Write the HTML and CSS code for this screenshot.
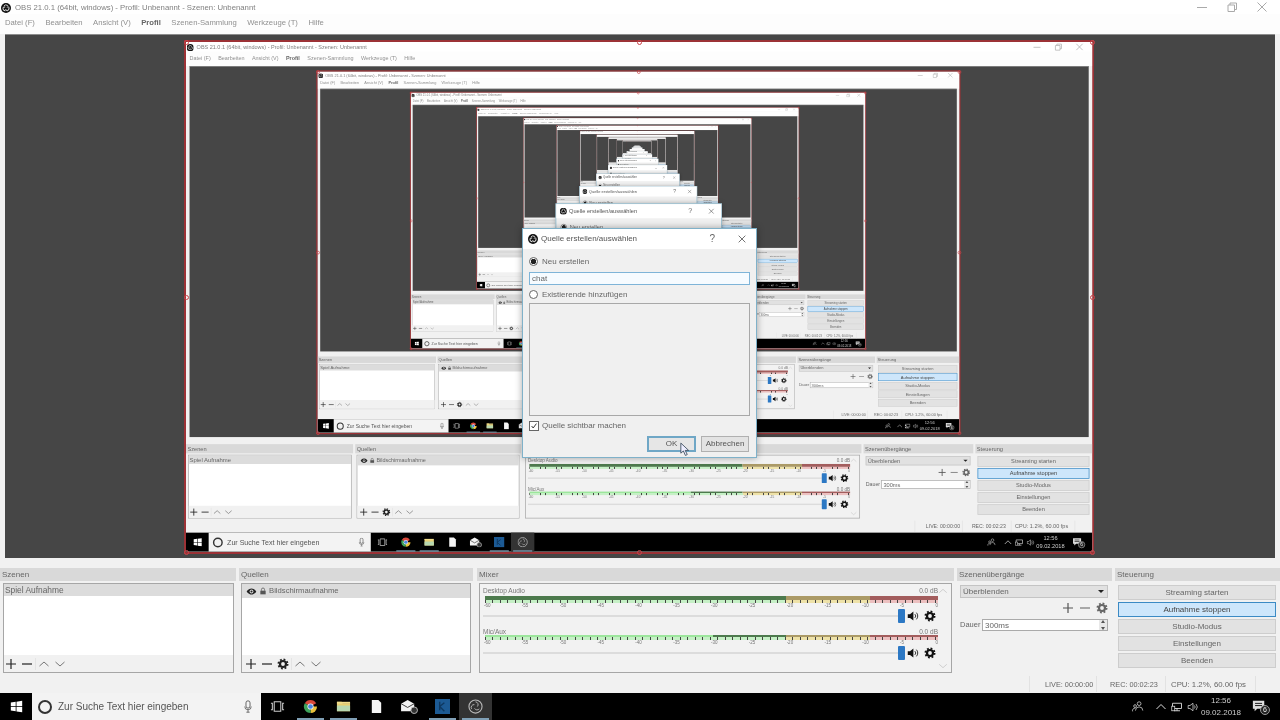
FILE: index.html
```html
<!DOCTYPE html>
<html lang="de">
<head>
<meta charset="utf-8">
<title>OBS 21.0.1</title>
<link rel="stylesheet" href="styles.css">
<script src="script.js" defer></script>
</head>
<body>
<svg class="sprite" aria-hidden="true">
  <symbol id="obs" viewBox="0 0 16 16"><circle cx="8" cy="8" r="8" fill="#111"/><g fill="none" stroke="#ddd" stroke-width="1.500"><path d="M4.500 5a4.500 4.500 0 0 1 6-1.200a2.500 2.500 0 0 1-.8 3.700"/><path d="M4.500 5a4.500 4.500 0 0 1 6-1.200a2.500 2.500 0 0 1-.8 3.700" transform="rotate(120 8 8)"/><path d="M4.500 5a4.500 4.500 0 0 1 6-1.200a2.500 2.500 0 0 1-.8 3.700" transform="rotate(240 8 8)"/></g></symbol>
  <symbol id="obs-tb" viewBox="0 0 16 16"><circle cx="8" cy="8" r="7" fill="none" stroke="#b8b8b8" stroke-width="1.2"/><path d="M8 3a3 3 0 0 1 2 5M3.800 10.500a3 3 0 0 1 3-4.500M12 10.500a3 3 0 0 1-5-.5" fill="none" stroke="#b8b8b8" stroke-width="1"/></symbol>
  <symbol id="plus" viewBox="0 0 12 12"><path d="M6 1v10M1 6h10" stroke="currentColor" stroke-width="1.2" fill="none"/></symbol>
  <symbol id="minus" viewBox="0 0 12 12"><path d="M1 6h10" stroke="currentColor" stroke-width="1.2" fill="none"/></symbol>
  <symbol id="up" viewBox="0 0 12 12"><path d="M1.500 8 6 4l4.500 4" stroke="currentColor" fill="none"/></symbol>
  <symbol id="down" viewBox="0 0 12 12"><path d="M1.500 4 6 8l4.500-4" stroke="currentColor" fill="none"/></symbol>
  <symbol id="gear" viewBox="0 0 12 12"><circle cx="6" cy="6" r="4.600" fill="none" stroke="currentColor" stroke-width="1.800" stroke-dasharray="1.800 1.810"/><circle cx="6" cy="6" r="3" fill="none" stroke="currentColor" stroke-width="2.200"/></symbol>
  <symbol id="eye" viewBox="0 0 16 16"><path d="M1 8s2.500-4.500 7-4.500S15 8 15 8s-2.500 4.500-7 4.500S1 8 1 8z" fill="#222"/><circle cx="8" cy="8" r="2.800" fill="#ddd"/><circle cx="8" cy="8" r="1.500" fill="#222"/></symbol>
  <symbol id="lock" viewBox="0 0 12 12"><rect x="2" y="5.500" width="8" height="5.500" fill="#555"/><path d="M3.700 5.500V3.800a2.300 2.300 0 0 1 4.600 0v1.700" fill="none" stroke="#555" stroke-width="1.100"/></symbol>
  <symbol id="speaker" viewBox="0 0 16 16"><path d="M1 5.500h3L8.500 2v12L4 10.500H1z" fill="#111"/><path d="M10.500 5.500a3.500 3.500 0 0 1 0 5M12.500 3.500a6.500 6.500 0 0 1 0 9" fill="none" stroke="#111" stroke-width="1.100"/></symbol>
  <symbol id="win" viewBox="0 0 16 16"><path d="M1 3l6-.900V7.600H1zM8 2l7-1v6.600H8zM1 8.500h6v5.400l-6-.900zM8 8.500h7V15l-7-1z" fill="#fff"/></symbol>
  <symbol id="mic" viewBox="0 0 12 16"><rect x="3.500" y="1" width="5" height="9" rx="2.500" fill="none" stroke="#555" stroke-width="1.100"/><path d="M2 8a4 4 0 0 0 8 0M6 12v3M4 15h4" fill="none" stroke="#555"/></symbol>
  <symbol id="taskview" viewBox="0 0 16 16"><path d="M4.500 3h7v10h-7zM1 4.500h1.500v7H1M15 4.500h-1.500v7H15" fill="none" stroke="#ccc" stroke-width="1.100"/></symbol>
  <symbol id="chrome" viewBox="0 0 16 16"><path d="M8 8 1.900 4.500A7 7 0 0 1 14.100 4.500z" fill="#d9483b"/><path d="M8 8h7A7 7 0 0 1 8 15z" fill="#eac13c"/><path d="M8 8v7A7 7 0 0 1 1.900 4.500z" fill="#3ea35a"/><circle cx="8" cy="8" r="3.300" fill="#eee"/><circle cx="8" cy="8" r="2.500" fill="#4a85e0"/></symbol>
  <symbol id="folder" viewBox="0 0 16 16"><path d="M1 3h5l1 1.500h8V13H1z" fill="#e8cf72"/><rect x="1" y="7" width="14" height="6" fill="#b8d8b0"/><rect x="1" y="3" width="14" height="2" fill="#f1dd8c"/></symbol>
  <symbol id="file" viewBox="0 0 16 16"><path d="M3 1h7l3 3v11H3z" fill="#f5f5f5"/></symbol>
  <symbol id="mail" viewBox="0 0 20 16"><path d="M1 5l7-4 7 4v8H1z" fill="#f2f2f2"/><path d="M1 5l7 4 7-4" fill="none" stroke="#333"/><circle cx="15" cy="12" r="3.500" fill="#333" stroke="#bbb"/></symbol>
  <symbol id="blue" viewBox="0 0 16 16"><rect width="16" height="16" fill="#1c5a94"/><path d="M5 3v9M5 8l5-4M5 8l5 5" stroke="#0e3860" stroke-width="1.500" fill="none"/></symbol>
  <symbol id="people" viewBox="0 0 16 16"><circle cx="10" cy="4.500" r="2.300" fill="none" stroke="#ccc"/><path d="M5.500 13a4.500 4.500 0 0 1 9 0M2 14a3 3 0 0 1 3-4" fill="none" stroke="#ccc"/><circle cx="5" cy="7.500" r="1.700" fill="none" stroke="#ccc"/></symbol>
  <symbol id="caret" viewBox="0 0 12 12"><path d="M1.500 8 6 3.500 10.500 8" fill="none" stroke="#ddd"/></symbol>
  <symbol id="net" viewBox="0 0 16 16"><path d="M2 3h12v7H2zM8 10v3M4 13h8" fill="none" stroke="#ddd" stroke-width="1.200"/><rect x="1" y="7" width="4" height="6" fill="#000" stroke="#ddd"/></symbol>
  <symbol id="vol" viewBox="0 0 16 16"><path d="M1.500 6h2.500L8 3v10L4 10H1.500z" fill="none" stroke="#ddd"/><path d="M10 6a3 3 0 0 1 0 4M12 4a6 6 0 0 1 0 8" fill="none" stroke="#ddd"/></symbol>
  <symbol id="notif" viewBox="0 0 16 16"><path d="M1 2h13v9H6l-3 3v-3H1z" fill="#ddd"/><path d="M3.500 5h8M3.500 7.500h8" stroke="#000"/></symbol>
</svg>

<div class="app">
  <div class="titlebar">
    <svg class="logo"><use href="#obs"/></svg>
    <span class="title-text">OBS 21.0.1 (64bit, windows) - Profil: Unbenannt - Szenen: Unbenannt</span>
    <div class="winctl">
      <svg viewBox="0 0 12 12"><path d="M1 6.500h10" stroke="#aaa" fill="none"/></svg>
      <svg viewBox="0 0 12 12"><path d="M2 4h6.500v6.500H2zM4 4V2h6.500v6.500H8.500" stroke="#aaa" fill="none"/></svg>
      <svg viewBox="0 0 12 12"><path d="M1.500 1.500l9 9M10.500 1.500l-9 9" stroke="#aaa" fill="none"/></svg>
    </div>
  </div>
  <div class="menubar">
    <span>Datei (F)</span><span>Bearbeiten</span><span>Ansicht (V)</span><span class="menu-active">Profil</span><span>Szenen-Sammlung</span><span>Werkzeuge (T)</span><span>Hilfe</span>
  </div>

  <div class="preview">
    <div class="sel">
      <i class="h h-tl"></i><i class="h h-tc"></i><i class="h h-tr"></i><i class="h h-ml"></i><i class="h h-mr"></i><i class="h h-bl"></i><i class="h h-bc"></i><i class="h h-br"></i>
    </div>
  </div>

  <div class="docks">
    <section class="dock">
      <h2 class="dock-head">Szenen</h2>
      <div class="listbox lb-scenes">
        <div class="row row-scene">Spiel Aufnahme</div>
        <div class="toolbar tb-scenes">
          <svg class="tool"><use href="#plus"/></svg><svg class="tool"><use href="#minus"/></svg><b class="tsep"></b><svg class="tool dim"><use href="#up"/></svg><svg class="tool dim"><use href="#down"/></svg>
        </div>
      </div>
    </section>

    <section class="dock">
      <h2 class="dock-head">Quellen</h2>
      <div class="listbox lb-sources">
        <div class="row row-source"><svg class="eye"><use href="#eye"/></svg><svg class="lock"><use href="#lock"/></svg><span>Bildschirmaufnahme</span></div>
        <div class="toolbar">
          <svg class="tool"><use href="#plus"/></svg><svg class="tool"><use href="#minus"/></svg><svg class="tool"><use href="#gear"/></svg><b class="tsep"></b><svg class="tool dim"><use href="#up"/></svg><svg class="tool dim"><use href="#down"/></svg>
        </div>
      </div>
    </section>

    <section class="dock dock-mixer">
      <h2 class="dock-head">Mixer</h2>
      <div class="mixer">
        <div class="tracks">
          <div class="track">
            <div class="track-head"><span>Desktop Audio</span><span>0.0 dB</span></div>
            <div class="meter"><b class="seg seg-g"></b><b class="seg seg-y"></b><b class="seg seg-r"></b></div>
            <div class="ticks"></div>
            <div class="scale"><span>-60</span><span>-55</span><span>-50</span><span>-45</span><span>-40</span><span>-35</span><span>-30</span><span>-25</span><span>-20</span><span>-15</span><span>-10</span><span>-5</span><span>0</span></div>
            <div class="fader"><b class="fader-line"></b><b class="thumb"></b><svg class="speaker"><use href="#speaker"/></svg><svg class="fgear"><use href="#gear"/></svg></div>
          </div>
          <div class="track">
            <div class="track-head"><span>Mic/Aux</span><span>0.0 dB</span></div>
            <div class="meter meter-mic"><b class="seg seg-lit"></b><b class="seg seg-g2"></b><b class="seg seg-y"></b><b class="seg seg-r"></b></div>
            <div class="ticks"></div>
            <div class="scale"><span>-60</span><span>-55</span><span>-50</span><span>-45</span><span>-40</span><span>-35</span><span>-30</span><span>-25</span><span>-20</span><span>-15</span><span>-10</span><span>-5</span><span>0</span></div>
            <div class="fader"><b class="fader-line"></b><b class="thumb"></b><svg class="speaker"><use href="#speaker"/></svg><svg class="fgear"><use href="#gear"/></svg></div>
          </div>
        </div>
        <div class="vscroll"><svg><use href="#up"/></svg><svg><use href="#down"/></svg></div>
      </div>
    </section>

    <section class="dock">
      <h2 class="dock-head">Szenenübergänge</h2>
      <div class="trans">
        <div class="combo"><span>Überblenden</span><b class="combo-arrow"></b></div>
        <div class="trans-tools"><svg class="tool"><use href="#plus"/></svg><svg class="tool dim"><use href="#minus"/></svg><svg class="tool dim2"><use href="#gear"/></svg></div>
        <div class="duration"><span class="dur-label">Dauer</span><div class="spin"><span>300ms</span><b class="spin-arrows"></b></div></div>
      </div>
    </section>

    <section class="dock">
      <h2 class="dock-head">Steuerung</h2>
      <div class="controls">
        <button class="ctl">Streaming starten</button>
        <button class="ctl ctl-on">Aufnahme stoppen</button>
        <button class="ctl">Studio-Modus</button>
        <button class="ctl">Einstellungen</button>
        <button class="ctl">Beenden</button>
      </div>
    </section>
  </div>

  <div class="status">
    <b class="st-sep sep-a"></b><span class="st st-live">LIVE: 00:00:00</span><b class="st-sep sep-b"></b><span class="st st-rec">REC: 00:02:23</span><b class="st-sep sep-c"></b><span class="st st-cpu">CPU: 1.2%, 60.00 fps</span><b class="st-sep sep-d"></b>
  </div>

  <div class="taskbar">
    <div class="start"><svg><use href="#win"/></svg></div>
    <div class="search"><b class="cortana"></b><span class="search-text">Zur Suche Text hier eingeben</span><svg class="mic"><use href="#mic"/></svg></div>
    <div class="tasks">
      <div class="task"><svg><use href="#taskview"/></svg></div>
      <div class="task on"><svg><use href="#chrome"/></svg></div>
      <div class="task on"><svg><use href="#folder"/></svg></div>
      <div class="task"><svg><use href="#file"/></svg></div>
      <div class="task"><svg class="wide"><use href="#mail"/></svg></div>
      <div class="task on"><svg><use href="#blue"/></svg></div>
      <div class="task on active"><svg><use href="#obs-tb"/></svg></div>
    </div>
    <div class="tray">
      <svg class="tray-people"><use href="#people"/></svg>
      <svg class="tray-i"><use href="#caret"/></svg>
      <svg class="tray-i"><use href="#net"/></svg>
      <svg class="tray-i"><use href="#vol"/></svg>
      <div class="clock"><span>12:56</span><span>09.02.2018</span></div>
      <div class="notif"><svg><use href="#notif"/></svg><em>6</em></div>
    </div>
  </div>

  <div class="dialog">
    <div class="dlg-title">
      <svg class="dlg-logo"><use href="#obs"/></svg>
      <span class="dlg-name">Quelle erstellen/auswählen</span>
      <span class="dlg-help">?</span>
      <svg class="dlg-x" viewBox="0 0 12 12"><path d="M2 2l8 8M10 2l-8 8" stroke="#555" fill="none"/></svg>
    </div>
    <div class="dlg-body">
      <label class="opt"><b class="radio radio-on"></b>Neu erstellen</label>
      <div class="dlg-input">chat</div>
      <label class="opt"><b class="radio"></b>Existierende hinzufügen</label>
      <div class="dlg-list"></div>
      <label class="opt opt-check"><b class="check"><svg viewBox="0 0 10 10"><path d="M2 5l2 2.500L8 2" fill="none" stroke="#333" stroke-width="1.200"/></svg></b>Quelle sichtbar machen</label>
      <div class="dlg-btns"><button class="dbtn dbtn-ok">OK</button><button class="dbtn">Abbrechen</button></div>
    </div>
    <svg class="cursor" viewBox="0 0 12 16"><path d="M2 1v11l2.800-2.400L7 14.500l2-1-2.200-4.500H10.500z" fill="#eef" stroke="#345" stroke-width=".9"/></svg>
  </div>
</div>
</body>
</html>
```
FILE: styles.css
```css
* { box-sizing: border-box; }
html, body { margin: 0; padding: 0; width: 1280px; height: 720px; overflow: hidden; background: #f0f0f0; }
.sprite { position: absolute; width: 0; height: 0; }

.app {
  position: relative;
  width: 1280px;
  height: 720px;
  display: flex;
  flex-direction: column;
  background: #f1f1f1;
  color: #555;
  font: 8px/1 "Liberation Sans", Arial, sans-serif;
  overflow: hidden;
}
.app.top { filter: blur(.6px); }
.app.nested { position: absolute; left: 0; top: 0; transform: scale(.708); transform-origin: 0 0; }

.titlebar { display: flex; align-items: center; height: 14px; padding-left: 1px; background: #fff; flex: none; }
.logo { width: 10px; height: 10px; margin-right: 4px; margin-top: 1px; }
.title-text { color: #808080; margin-top: 1px; font-size: 7.750px; }
.winctl { margin-left: auto; display: flex; gap: 18px; padding-right: 12px; }
.winctl svg { width: 12px; height: 12px; }

.menubar { display: flex; gap: 10.500px; align-items: center; height: 20px; padding: 0 5px 3px; background: #fdfdfd; color: #909090; font-size: 7.700px; flex: none; }
.menu-active { font-weight: 700; color: #666; }

.preview { position: relative; margin: 0 5px; height: 524px; flex: none; background: #464646; border-top: 1px solid #8d8d8d; }
.sel { position: absolute; left: 181px; top: 7px; width: 906px; height: 510px; outline: 2px solid #9c3236; }
.h { position: absolute; width: 5px; height: 5px; margin: -2.500px 0 0 -2.500px; border: 1px solid #c9454b; border-radius: 50%; z-index: 2; }
.h-tl, .h-ml, .h-bl { left: 0; }
.h-tc, .h-bc { left: 50%; }
.h-tr, .h-mr, .h-br { left: 100%; }
.h-tl, .h-tc, .h-tr { top: 0; }
.h-ml, .h-mr { top: 50%; }
.h-bl, .h-bc, .h-br { top: 100%; }

.docks { display: grid; grid-template-columns: 236px 234px 478px 155px 165px; column-gap: 3px; margin-top: 10px; height: 105px; flex: none; }
.dock { display: flex; flex-direction: column; min-width: 0; }
.dock-mixer { padding-left: 1px; }
.dock-head { margin: 0; height: 13px; padding: 2px; background: #d9d9d9; font: inherit; color: #666; line-height: 10px; flex: none; }

.listbox { position: relative; display: flex; flex-direction: column; height: 90px; margin-top: 2px; background: #fff; border: 1px solid #a6a6a6; flex: none; }
.lb-scenes { margin-left: 3px; margin-right: 2px; }
.lb-sources { margin-left: 2px; margin-right: 2px; }
.row { display: flex; align-items: center; background: #dcdcdc; color: #666; }
.row-scene { height: 12px; padding-left: 1px; font-size: 8.400px; }
.row-source { height: 14px; padding-left: 4px; font-size: 7.700px; }
.eye { width: 11px; height: 11px; margin-right: 2px; }
.lock { width: 8px; height: 8px; margin-right: 2px; }
.toolbar { margin-top: auto; height: 17px; display: flex; align-items: center; padding-left: 3px; gap: 4px; background: #f1f1f1; color: #222; }
.tb-scenes { padding-left: 1px; }
.tool { width: 12px; height: 12px; flex: none; }
.dim { color: #777; }
.dim2 { color: #666; }
.tsep { width: 1px; height: 12px; background: #e4e4e4; margin: 0 -2px; }

.mixer { display: flex; height: 90px; margin: 2px 2px 0 2px; border: 1px solid #a6a6a6; background: #f2f2f2; flex: none; }
.tracks { flex: 1; padding: 2px 0 0 3px; min-width: 0; }
.track { height: 38.500px; }
.track + .track { margin-top: 2px; }
.track-head { display: flex; justify-content: space-between; height: 9px; font-size: 6.500px; color: #777; line-height: 9px; }
.meter { display: flex; height: 4px; margin-left: 2px; margin-top: 1px; }
.seg { display: block; }
.seg-g { flex: 300; background: #4d7a4d; }
.seg-lit { flex: 227; background: #9ce69c; }
.seg-g2 { flex: 73; background: #4d7a4d; }
.seg-y { flex: 83; background: #ab9a66; }
.seg-r { flex: 68; background: #a35d5d; }
.meter-mic { height: 2px; margin-top: -1px; }
.ticks { height: 3px; margin-left: 2px; background:
  repeating-linear-gradient(90deg, #444 0 1px, transparent 1px 7.500px),
  linear-gradient(90deg, #c6f0c6 0 66.500%, #eee2a8 66.500% 85%, #ecc0c0 85%); }
.scale { display: flex; justify-content: space-between; margin-left: 1px; height: 6px; font-size: 4.500px; line-height: 6px; color: #777; }
.fader { position: relative; display: flex; justify-content: flex-end; align-items: center; height: 14px; padding-right: 2px; gap: 5px; }
.fader-line { position: absolute; left: 0; right: 40px; top: 6px; height: 2px; background: #dcdcdc; }
.thumb { position: absolute; right: 33px; top: 0; width: 7px; height: 14px; background: #2c78c4; border-radius: 1px; }
.speaker { width: 12px; height: 12px; color: #111; }
.fgear { width: 12px; height: 12px; color: #111; }
.vscroll { width: 13px; display: flex; flex-direction: column; justify-content: space-between; color: #c8c8c8; padding: 2px 0 1px; }
.vscroll svg { width: 10px; height: 10px; }

.trans { display: flex; flex-direction: column; padding: 4px 4px 0 3px; }
.combo { display: flex; justify-content: space-between; align-items: center; height: 13px; padding: 0 3px 0 2px; background: #e1e1e1; border: 1px solid #c4c4c4; color: #666; }
.combo-arrow { width: 0; height: 0; border: 3px solid transparent; border-top: 3px solid #222; border-bottom: 0; }
.trans-tools { display: flex; justify-content: flex-end; gap: 5px; margin-top: 4px; height: 12px; }
.duration { display: flex; align-items: center; gap: 2px; margin-top: 5px; height: 12px; color: #666; }
.dur-label { width: 20px; flex: none; font-size: 7.500px; }
.spin { position: relative; flex: 1; height: 12px; padding: 2px 0 0 2px; background: #fff; border: 1px solid #aaa; }
.spin-arrows { position: absolute; right: 0; top: 0; bottom: 0; width: 8px; background: #e8e8e8; }
.spin-arrows::before, .spin-arrows::after { content: ""; position: absolute; left: 2px; width: 0; height: 0; border: 2px solid transparent; }
.spin-arrows::before { top: 0; border-bottom: 3px solid #555; border-top: 0; }
.spin-arrows::after { bottom: 0; border-top: 3px solid #555; border-bottom: 0; }

.controls { display: flex; flex-direction: column; gap: 2px; padding: 4px 4px 0 3px; }
.ctl { height: 15px; padding: 0; background: #e2e2e2; border: 1px solid #cdcdcd; font: inherit; color: #666; }
.ctl-on { background: #cde6fb; border-color: #3b8ac4; color: #444; }

.status { position: relative; display: flex; height: 20px; flex: none; color: #666; }
.st { position: absolute; top: 8px; }
.st-live { left: 1045px; font-size: 7.300px; }
.st-rec { left: 1110px; font-size: 7.300px; }
.st-cpu { left: 1171px; font-size: 7.800px; }
.st-sep { position: absolute; top: 3px; bottom: 1px; width: 1px; background: #e2e2e2; }
.sep-a { left: 1029px; }
.sep-b { left: 1096px; }
.sep-c { left: 1165px; }
.sep-d { left: 1255px; }

.taskbar { display: flex; height: 27px; background: #000; flex: none; }
.start { width: 32px; display: flex; align-items: center; justify-content: center; }
.start svg { width: 13px; height: 13px; }
.search { display: flex; align-items: center; width: 229px; padding: 0 8px 0 6px; background: #f3f3f3; color: #555; font-size: 10px; }
.cortana { width: 14px; height: 14px; margin-right: 6px; border: 2px solid #333; border-radius: 50%; flex: none; }
.mic { width: 10px; height: 13px; margin-left: auto; }
.tasks { display: flex; }
.task { position: relative; width: 33px; display: flex; align-items: center; justify-content: center; }
.task svg { width: 15px; height: 15px; }
.task svg.wide { width: 19px; }
.task.on::after { content: ""; position: absolute; left: 3px; right: 3px; bottom: 0; height: 2px; background: #7f9fb5; }
.active { background: #333; }
.tray { display: flex; align-items: center; margin-left: auto; color: #ddd; padding-right: 12px; }
.tray-people { width: 13px; height: 13px; margin-right: 7px; }
.tray-i { width: 12px; height: 12px; margin-left: 4px; }
.clock { display: flex; flex-direction: column; align-items: center; gap: 4px; width: 44px; margin-left: 0; color: #ccc; }
.notif { position: relative; margin-left: 9px; width: 16px; height: 16px; }
.notif svg { width: 14px; height: 14px; }
.notif em { position: absolute; right: -2px; bottom: 0; width: 10px; height: 10px; border-radius: 50%; background: #222; border: 1px solid #999; font: 7px/8px "Liberation Sans", sans-serif; text-align: center; color: #eee; }

.dialog { position: absolute; left: 522px; top: 228px; width: 235px; height: 230px; display: flex; flex-direction: column; background: #f0f0f0; border: 1px solid #7fb1c9; box-shadow: 0 0 7px rgba(0,0,0,.35); z-index: 5; color: #666; }
.dlg-title { display: flex; align-items: center; height: 20px; padding: 0 9px 0 5px; background: #fff; flex: none; }
.dlg-logo { width: 10px; height: 10px; margin-right: 3px; }
.dlg-name { color: #555; }
.dlg-help { margin-left: auto; margin-right: 22px; font-size: 10px; color: #666; }
.dlg-x { width: 10px; height: 10px; }
.dlg-body { padding: 7px 6px 0; display: flex; flex-direction: column; }
.opt { display: flex; align-items: center; gap: 4px; height: 11px; color: #666; }
.radio { width: 9px; height: 9px; border: 1px solid #666; border-radius: 50%; background: #fff; flex: none; }
.radio-on { background: radial-gradient(circle, #222 0 2.500px, #fff 3px); }
.dlg-input { height: 13px; margin: 5px 0 4px; padding: 2px; background: #f6fbff; border: 1px solid #7eb4d8; }
.dlg-list { height: 113px; margin-top: 3px; background: #f0f0f0; border: 1px solid #a8a8a8; }
.opt-check { margin-top: 4px; height: 12px; gap: 3px; }
.check { width: 10px; height: 10px; border: 1px solid #666; background: #fff; flex: none; display: flex; }
.check svg { width: 8px; height: 8px; }
.dlg-btns { display: flex; justify-content: flex-end; gap: 5px; margin-top: 4px; padding-right: 1px; }
.dbtn { width: 48px; height: 16px; padding: 0; background: #e3e3e3; border: 1px solid #b0b0b0; font: inherit; color: #555; }
.dbtn-ok { width: 49px; background: #e6e6e6; border: 2px solid #6fa7c6; }
.cursor { position: absolute; left: 156px; top: 213px; width: 11px; height: 15px; z-index: 6; }
.nested .cursor { display: none; }
```
FILE: script.js
```js
// Each preview shows the whole window again: clone it into its own preview.
(function () {
  var DEPTH = 11;
  var LEGIBLE = 7;
  var root = document.querySelector('.app');
  var proto = root.cloneNode(true);
  root.classList.add('top');

  var bare = proto.cloneNode(true);
  var walker = document.createTreeWalker(bare, NodeFilter.SHOW_TEXT);
  var nodes = [];
  while (walker.nextNode()) { nodes.push(walker.currentNode); }
  nodes.forEach(function (n) { n.nodeValue = ''; });

  var slot = root.querySelector('.sel');
  for (var i = 0; i < DEPTH; i++) {
    var copy = (i < LEGIBLE ? proto : bare).cloneNode(true);
    copy.classList.add('nested');
    slot.appendChild(copy);
    slot = copy.querySelector('.sel');
  }
})();
```
